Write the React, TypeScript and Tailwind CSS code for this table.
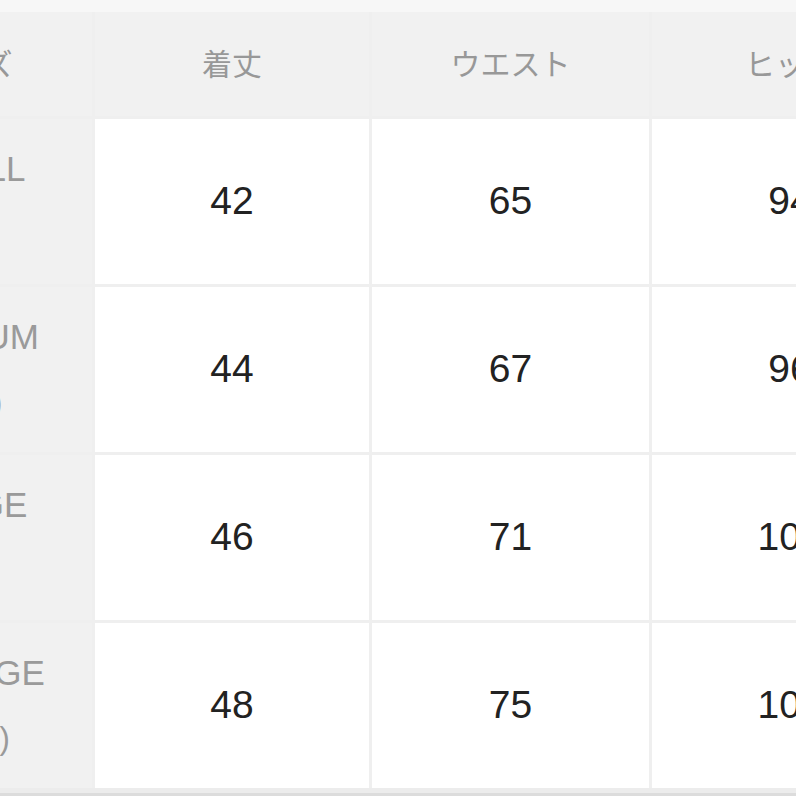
import React from "react";

const rows = [
  { l1: "SMALL", l2: "(S)", v: ["42", "65", "94"] },
  { l1: "MEDIUM", l2: "(9号)", v: ["44", "67", "96"] },
  { l1: "LARGE", l2: "(L)", v: ["46", "71", "100"] },
  { l1: "X-LARGE", l2: "(11号)", v: ["48", "75", "104"] },
];

const headers = ["着丈", "ウエスト", "ヒップ"];

export default function App() {
  return (
    <div className="w-[796px] h-[796px] overflow-hidden bg-[#f7f7f7] flex flex-col pt-[12px]">
      <div
        className="ml-[-156px] grid grid-cols-[248px_274px_277px_276px] grid-rows-[104px_165px_165px_165px_165px] gap-[3px] bg-[#efefef] w-max"
        style={{ fontFamily: '"Liberation Sans", "Noto Sans CJK JP", sans-serif' }}
      >
        <div className="bg-[#f1f1f1] flex items-center justify-center text-[30px] text-[#989898]">
          サイズ
        </div>
        {headers.map((h) => (
          <div
            key={h}
            className="bg-[#f1f1f1] flex items-center justify-center text-[30px] text-[#989898]"
          >
            {h}
          </div>
        ))}
        {rows.map((r) => (
          <React.Fragment key={r.l1}>
            <div className="bg-[#f1f1f1] flex flex-col items-center justify-center gap-[26px] text-[#9a9a9a]">
              <div className="text-[35px] leading-[40px]">{r.l1}</div>
              <div className="text-[31px] leading-[40px]">{r.l2}</div>
            </div>
            {r.v.map((v, i) => (
              <div
                key={i}
                className="bg-white flex items-center justify-center text-[39px] text-[#222222]"
              >
                {v}
              </div>
            ))}
          </React.Fragment>
        ))}
      </div>
      <div className="h-[5px] bg-[#ececec]" />
      <div className="flex-1 bg-[#dcdcdc]" />
    </div>
  );
}
